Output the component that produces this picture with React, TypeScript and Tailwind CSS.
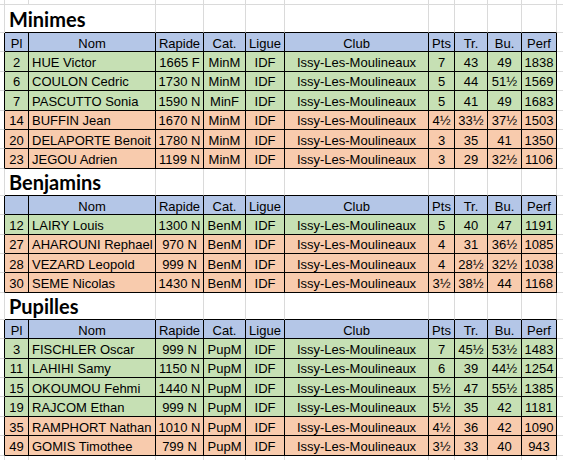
import React from "react";

const W = [
  "w-[24px]",
  "w-[127px]",
  "w-[48px]",
  "w-[42px]",
  "w-[39px]",
  "w-[144px]",
  "w-[26px]",
  "w-[33px]",
  "w-[34px]",
  "w-[35px]",
];

type Row = { c: string[]; g: boolean };

const HEAD = ["Pl", "Nom", "Rapide", "Cat.", "Ligue", "Club", "Pts", "Tr.", "Bu.", "Perf"];
const CLUB = "Issy-Les-Moulineaux";

const minimes: Row[] = [
  { c: ["2", "HUE Victor", "1665 F", "MinM", "IDF", CLUB, "7", "43", "49", "1838"], g: true },
  { c: ["6", "COULON Cedric", "1730 N", "MinM", "IDF", CLUB, "5", "44", "51½", "1569"], g: true },
  { c: ["7", "PASCUTTO Sonia", "1590 N", "MinF", "IDF", CLUB, "5", "41", "49", "1683"], g: true },
  { c: ["14", "BUFFIN Jean", "1670 N", "MinM", "IDF", CLUB, "4½", "33½", "37½", "1503"], g: false },
  { c: ["20", "DELAPORTE Benoit", "1780 N", "MinM", "IDF", CLUB, "3", "35", "41", "1350"], g: false },
  { c: ["23", "JEGOU Adrien", "1199 N", "MinM", "IDF", CLUB, "3", "29", "32½", "1106"], g: false },
];

const benjamins: Row[] = [
  { c: ["12", "LAIRY Louis", "1300 N", "BenM", "IDF", CLUB, "5", "40", "47", "1191"], g: true },
  { c: ["27", "AHAROUNI Rephael", "970 N", "BenM", "IDF", CLUB, "4", "31", "36½", "1085"], g: false },
  { c: ["28", "VEZARD Leopold", "999 N", "BenM", "IDF", CLUB, "4", "28½", "32½", "1038"], g: false },
  { c: ["30", "SEME Nicolas", "1430 N", "BenM", "IDF", CLUB, "3½", "38½", "44", "1168"], g: false },
];

const pupilles: Row[] = [
  { c: ["3", "FISCHLER Oscar", "999 N", "PupM", "IDF", CLUB, "7", "45½", "53½", "1483"], g: true },
  { c: ["11", "LAHIHI Samy", "1150 N", "PupM", "IDF", CLUB, "6", "39", "44½", "1254"], g: true },
  { c: ["15", "OKOUMOU Fehmi", "1440 N", "PupM", "IDF", CLUB, "5½", "47", "55½", "1385"], g: true },
  { c: ["19", "RAJCOM Ethan", "999 N", "PupM", "IDF", CLUB, "5½", "35", "42", "1181"], g: true },
  { c: ["35", "RAMPHORT Nathan", "1010 N", "PupM", "IDF", CLUB, "4½", "36", "42", "1090"], g: false },
  { c: ["49", "GOMIS Timothee", "799 N", "PupM", "IDF", CLUB, "3½", "33", "40", "943"], g: false },
];

function TableRow({ cells, bg, header }: { cells: string[]; bg: string; header?: boolean }) {
  return (
    <div className="flex h-[19.4px]">
      <div className="w-[5px] shrink-0 border-r border-b border-r-black border-b-[#dadada]" />
      {cells.map((c, i) => (
        <div
          key={i}
          className={`${W[i]} ${bg} shrink-0 border-r border-b border-black flex items-center pt-[2px] overflow-hidden whitespace-nowrap leading-[13px] ${
            i === 1 && !header ? "justify-start pl-[3px]" : "justify-center"
          }`}
        >
          {c}
        </div>
      ))}
      <div className="flex-1 border-b border-[#dadada]" />
    </div>
  );
}

function TitleRow({ title, h }: { title: string; h: string }) {
  return (
    <div className={`flex ${h}`}>
      <div className="w-[5px] shrink-0 border-r border-b border-[#dadada]" />
      <div className="w-[151px] shrink-0 border-r border-r-[#dadada] border-b border-b-black flex items-end pl-[4px] pb-[3px] whitespace-nowrap">
        <span className="text-[20px] font-bold leading-none text-black" style={{ fontFamily: "Lato, 'Noto Sans', sans-serif" }}>
          {title}
        </span>
      </div>
      {W.slice(2).map((w, i) => (
        <div key={i} className={`${w} shrink-0 border-r border-r-[#dadada] border-b border-b-black`} />
      ))}
      <div className="flex-1 border-b border-[#dadada]" />
    </div>
  );
}

function GridRow({ h }: { h: string }) {
  return (
    <div className={`flex ${h}`}>
      <div className="w-[5px] shrink-0 border-r border-b border-[#dadada]" />
      {W.map((w, i) => (
        <div key={i} className={`${w} shrink-0 border-r border-b border-[#dadada]`} />
      ))}
      <div className="flex-1 border-b border-[#dadada]" />
    </div>
  );
}

function Section({ title, h, rows, showPl }: { title: string; h: string; rows: Row[]; showPl: boolean }) {
  const head = showPl ? HEAD : ["", ...HEAD.slice(1)];
  return (
    <>
      <TitleRow title={title} h={h} />
      <TableRow cells={head} bg="bg-[#b4c6e7]" header />
      {rows.map((r, i) => (
        <TableRow key={i} cells={r.c} bg={r.g ? "bg-[#c6e0b4]" : "bg-[#f8cbad]"} />
      ))}
    </>
  );
}

export default function App() {
  return (
    <div
      className="w-[563px] h-[460px] overflow-hidden bg-white text-[13px] text-black"
      style={{ fontFamily: "'Liberation Sans', Arial, sans-serif" }}
    >
      <GridRow h="h-[5px]" />
      <Section title="Minimes" h="h-[28px]" rows={minimes} showPl={true} />
      <Section title="Benjamins" h="h-[27.2px]" rows={benjamins} showPl={false} />
      <Section title="Pupilles" h="h-[27px]" rows={pupilles} showPl={true} />
      <GridRow h="h-[20px]" />
    </div>
  );
}
